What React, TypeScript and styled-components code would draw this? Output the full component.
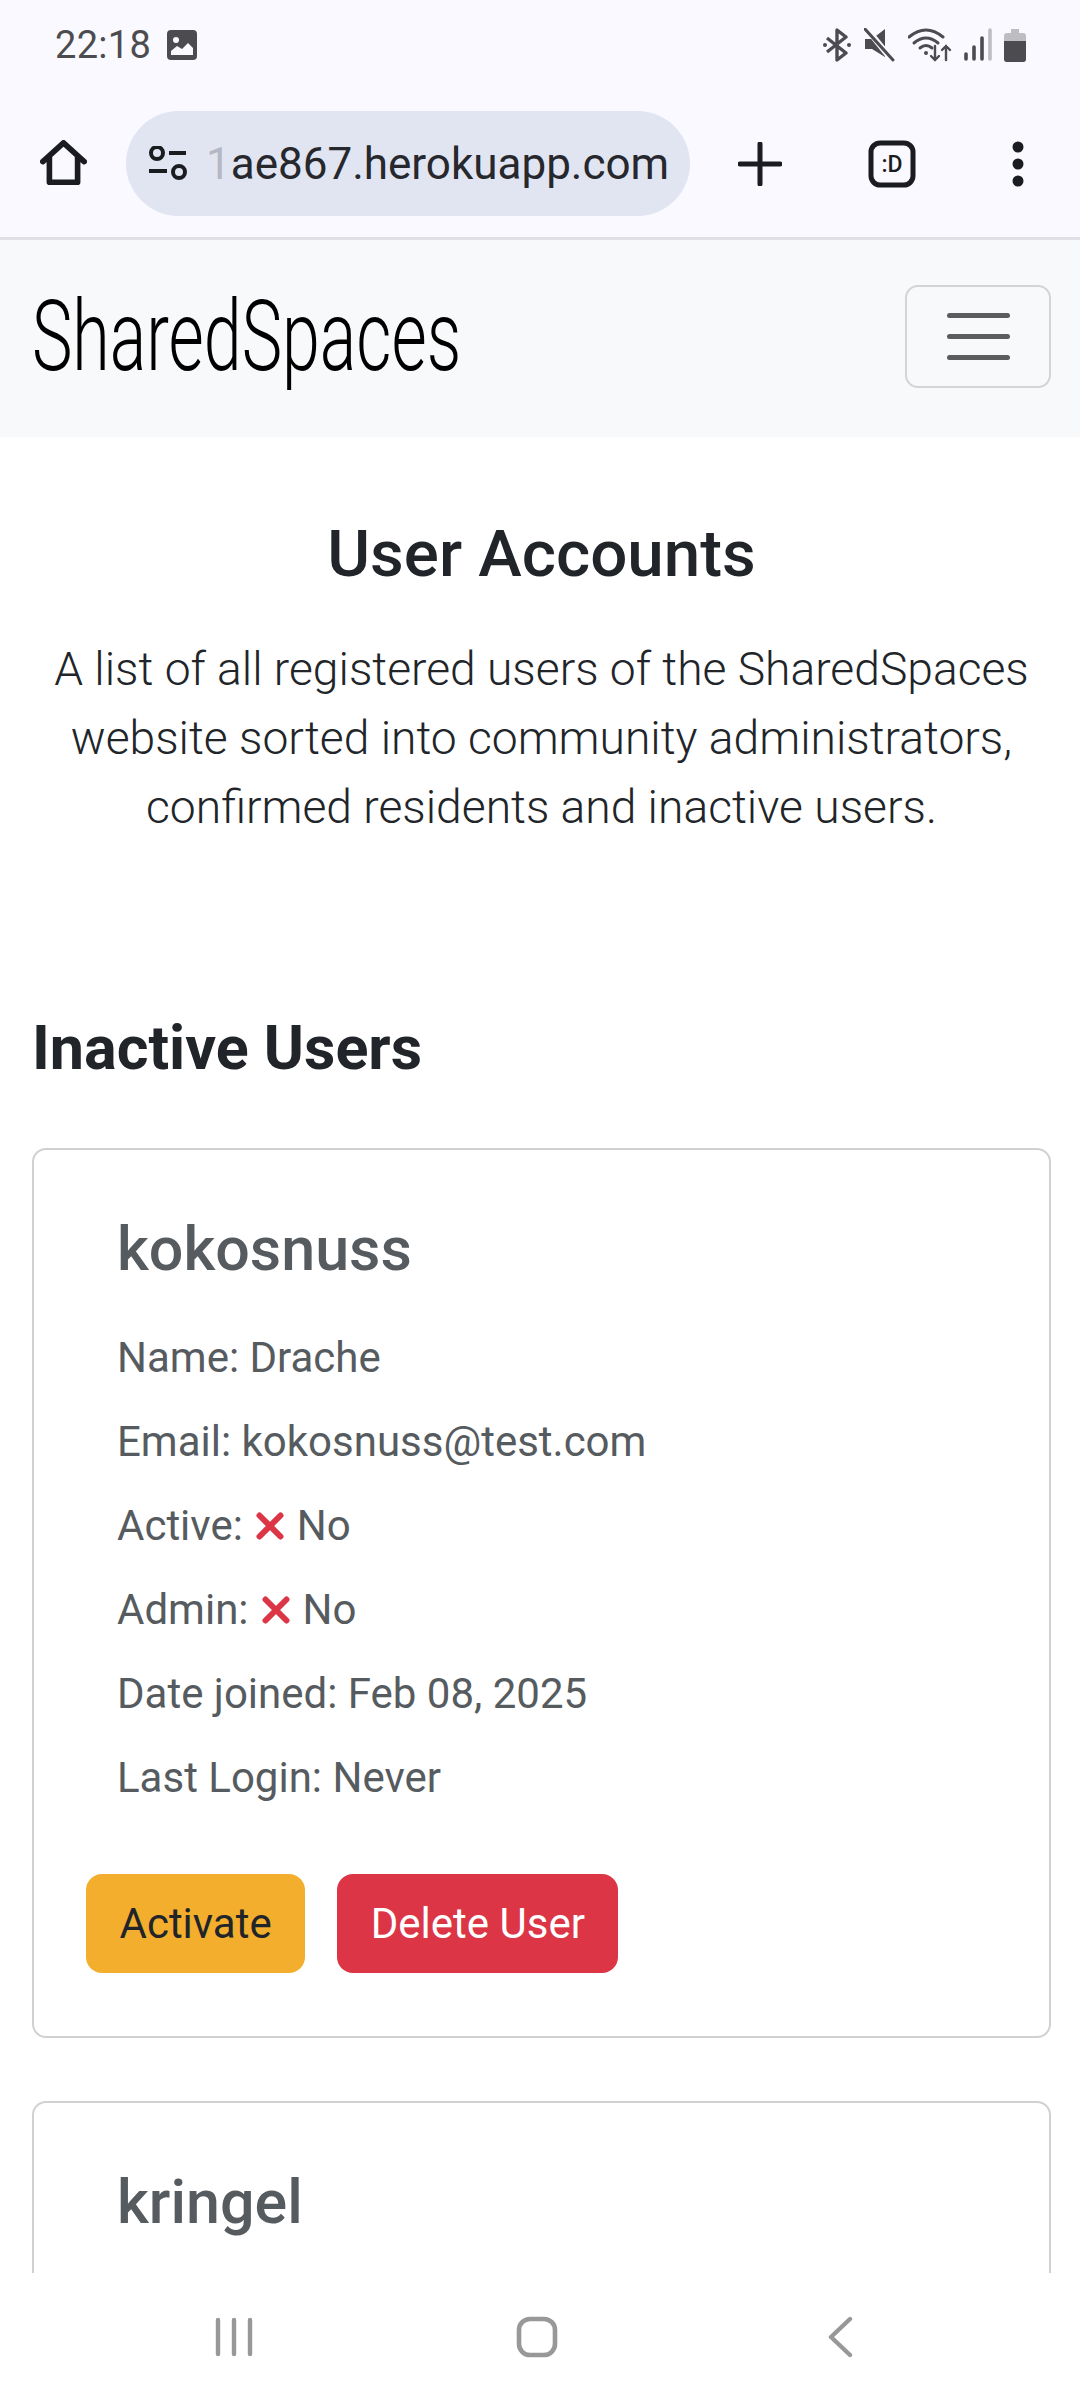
import React from 'react';
import styled, { createGlobalStyle } from 'styled-components';

const GlobalStyle = createGlobalStyle`
  html, body, #root {
    margin: 0;
    padding: 0;
    width: 1080px;
    height: 2400px;
    overflow: hidden;
    background: #ffffff;
  }
  * { box-sizing: border-box; }
`;

const Screen = styled.div`
  width: 1080px;
  height: 2400px;
  display: flex;
  flex-direction: column;
  font-family: Roboto, "Liberation Sans", sans-serif;
  color: #212529;
`;

const StatusBar = styled.div`
  height: 90px;
  padding: 0 54px 0 55px;
  display: flex;
  align-items: center;
  justify-content: space-between;
  background: #f9f9ff;
  color: #4c4c50;
`;

const StatusLeft = styled.div`
  display: flex;
  align-items: center;
  gap: 16px;
`;

const Clock = styled.span`
  font-size: 38px;
  letter-spacing: 0.3px;
`;

const StatusRight = styled.div`
  display: flex;
  align-items: center;
  gap: 12px;
`;

const BrowserBar = styled.div`
  height: 150px;
  padding: 0 0 0 40px;
  display: flex;
  align-items: center;
  background: #f9f9ff;
  border-bottom: 3px solid #dfe1e7;
`;

const UrlPill = styled.div`
  width: 564px;
  height: 105px;
  margin-left: 39px;
  padding: 0 0 0 22px;
  border-radius: 53px;
  background: #e1e5f1;
  display: flex;
  align-items: center;
  overflow: hidden;

  svg {
    flex-shrink: 0;
  }
`;

const UrlFade = styled.span`
  color: #b4b8c2;
  margin-left: 18px;
`;

const UrlText = styled.span`
  font-size: 44px;
  color: #26282d;
  white-space: nowrap;
`;

const BarIcon = styled.div<{ $left: number }>`
  margin-left: ${(p) => p.$left}px;
  display: flex;
  align-items: center;
`;

const NavBar = styled.nav`
  height: 197px;
  padding: 0 29px 4px 32px;
  display: flex;
  align-items: center;
  justify-content: space-between;
  background: #f8f9fa;
`;

const Brand = styled.div`
  font-family: Roboto, "Liberation Sans", sans-serif;
  font-size: 98px;
  font-weight: 350;
  line-height: 1;
  color: #000000;
  transform: scaleX(0.695);
  transform-origin: left center;
  white-space: nowrap;
  width: 429px;
`;

const Toggler = styled.button`
  width: 146px;
  height: 103px;
  padding: 0;
  border: 2px solid #d3d4d5;
  border-radius: 13px;
  background: transparent;
  display: flex;
  flex-direction: column;
  align-items: center;
  justify-content: center;
  gap: 16px;
`;

const TogglerLine = styled.span`
  width: 63px;
  height: 5px;
  border-radius: 3px;
  background: #5b5c5e;
`;

const Content = styled.main`
  flex: 1;
  min-height: 0;
  overflow: hidden;
  padding: 0 29px 0 32px;
  background: #ffffff;
`;

const PageTitle = styled.h1`
  margin: 78px 0 0;
  font-size: 65.5px;
  line-height: 1.2;
  font-weight: 500;
  text-align: center;
  color: #212529;
`;

const Lead = styled.p`
  margin: 41px 0 0;
  font-size: 46.2px;
  line-height: 69px;
  font-weight: 300;
  text-align: center;
  color: #212529;
`;

const SectionTitle = styled.h2`
  margin: 170px 0 0;
  font-size: 61px;
  line-height: 1.2;
  font-weight: 700;
  color: #212529;
`;

const Card = styled.section`
  margin-top: 63px;
  padding: 63px 52px 63px;
  border: 2px solid #d0d1d3;
  border-radius: 14px;
  background: #ffffff;
`;

const CardBody = styled.div`
  padding: 0 31px;
  color: #565b60;
`;

const UserName = styled.h3`
  margin: 0 0 30px;
  font-size: 61px;
  line-height: 1.2;
  font-weight: 500;
  color: #565b60;
`;

const Field = styled.p`
  margin: 0;
  height: 84px;
  display: flex;
  align-items: center;
  font-size: 42px;
  gap: 13px;
`;

const Actions = styled.div`
  margin-top: 54px;
  display: flex;
  gap: 32px;
`;

const ActionButton = styled.button<{ $bg: string; $fg: string }>`
  height: 99px;
  padding: 0 33.5px;
  border: none;
  border-radius: 16px;
  background: ${(p) => p.$bg};
  color: ${(p) => p.$fg};
  font-family: inherit;
  font-size: 42px;
`;

const SystemNav = styled.div`
  height: 127px;
  flex-shrink: 0;
  padding-left: 82px;
  display: grid;
  grid-template-columns: repeat(3, 303px);
  align-items: center;
  justify-items: center;
  background: #ffffff;
`;

const CrossIcon = () => (
  <svg width="28" height="28" viewBox="0 0 28 28">
    <path d="M3.5 3.5 L24.5 24.5 M24.5 3.5 L3.5 24.5" stroke="#dc3545" strokeWidth="6" strokeLinecap="round" fill="none" />
  </svg>
);

const PictureIcon = () => (
  <svg width="30" height="30" viewBox="0 0 30 30">
    <rect width="30" height="30" rx="4" fill="#4c4c50" />
    <circle cx="9" cy="10" r="3" fill="#f9f9ff" />
    <path d="M4 25 V21 L10 16 L15 19 L21 13 L26 18 V25 Z" fill="#f9f9ff" />
  </svg>
);

const BluetoothIcon = () => (
  <svg width="30" height="34" viewBox="0 0 30 34" fill="none" stroke="#4c4c50" strokeWidth="3.4">
    <path d="M5 10 L24 25 L15 32 V2 L24 9 L5 24" strokeLinejoin="round" />
    <circle cx="3" cy="17" r="2" fill="#4c4c50" stroke="none" />
    <circle cx="27" cy="17" r="2" fill="#4c4c50" stroke="none" />
  </svg>
);

const MuteIcon = () => (
  <svg width="32" height="34" viewBox="0 0 32 34">
    <path d="M1 11 H8 L21 1 V29 L8 21 H1 Z" fill="#4c4c50" />
    <path d="M3 1 L28 32" stroke="#f9f9ff" strokeWidth="6" />
    <path d="M1 1 L29 32" stroke="#4c4c50" strokeWidth="3" strokeLinecap="round" />
  </svg>
);

const WifiIcon = () => (
  <svg width="44" height="34" viewBox="0 0 44 34" fill="none" stroke="#4c4c50" strokeWidth="3" strokeLinecap="round">
    <path d="M1 9 Q18 -5 35 9" />
    <path d="M6 15 Q18 5 30 15" />
    <path d="M12 20 Q18 15 24 20" />
    <circle cx="18" cy="25" r="2" fill="#4c4c50" stroke="none" />
    <path d="M27 18 V32 M23 28 L27 32 L31 28" strokeWidth="2.4" />
    <path d="M38 32 V18 M34 22 L38 18 L42 22" strokeWidth="2.4" />
  </svg>
);

const SignalIcon = () => (
  <svg width="28" height="34" viewBox="0 0 28 34" fill="none" strokeWidth="3.6" strokeLinecap="round">
    <path d="M2 26 V31" stroke="#4c4c50" />
    <path d="M10 19 V31" stroke="#4c4c50" />
    <path d="M18 10 V31" stroke="#4c4c50" />
    <path d="M26 2 V31" stroke="#bdbdc2" />
  </svg>
);

const BatteryIcon = () => (
  <svg width="22" height="34" viewBox="0 0 22 34">
    <path d="M7 1 H15 V5 H19 Q22 5 22 8 V31 Q22 34 19 34 H3 Q0 34 0 31 V8 Q0 5 3 5 H7 Z" fill="#bdbdc2" />
    <path d="M0 13 H22 V31 Q22 34 19 34 H3 Q0 34 0 31 Z" fill="#4c4c50" />
  </svg>
);

const HomeIcon = () => (
  <svg width="47" height="47" viewBox="0 0 50 50" fill="none" stroke="#1b1c20" strokeWidth="6" strokeLinejoin="round" strokeLinecap="round">
    <path d="M3 23 L25 3 L47 23 M10 18 V45 H40 V18" />
  </svg>
);

const TuneIcon = () => (
  <svg width="40" height="36" viewBox="0 0 40 36" fill="none" stroke="#1b1c20" strokeWidth="4">
    <circle cx="9" cy="7" r="6" />
    <path d="M21 7 H38" />
    <path d="M1 25 H19" />
    <circle cx="31" cy="26" r="6" />
  </svg>
);

const PlusIcon = () => (
  <svg width="44" height="44" viewBox="0 0 44 44" stroke="#1b1c20" strokeWidth="5" strokeLinecap="round">
    <path d="M22 2 V42 M2 22 H42" />
  </svg>
);

const TabsIcon = () => (
  <svg width="48" height="48" viewBox="0 0 48 48">
    <rect x="3" y="3" width="42" height="42" rx="9" fill="none" stroke="#1b1c20" strokeWidth="5" />
    <text x="24" y="32" textAnchor="middle" fontFamily="Roboto, sans-serif" fontSize="23" fontWeight="500" fill="#1b1c20">:D</text>
  </svg>
);

const MoreIcon = () => (
  <svg width="14" height="46" viewBox="0 0 14 46" fill="#1b1c20">
    <circle cx="7" cy="6" r="5.5" />
    <circle cx="7" cy="23" r="5.5" />
    <circle cx="7" cy="40" r="5.5" />
  </svg>
);

const RecentsIcon = () => (
  <svg width="38" height="40" viewBox="0 0 38 40" stroke="#989898" strokeWidth="4.4" strokeLinecap="round">
    <path d="M3 3 V37 M19 3 V37 M35 3 V37" />
  </svg>
);

const HomeNavIcon = () => (
  <svg width="42" height="42" viewBox="0 0 42 42" fill="none" stroke="#989898" strokeWidth="4.6">
    <rect x="3" y="3" width="36" height="36" rx="11" />
  </svg>
);

const BackIcon = () => (
  <svg width="26" height="42" viewBox="0 0 26 42" fill="none" stroke="#989898" strokeWidth="4.4" strokeLinecap="round" strokeLinejoin="round">
    <path d="M23 3 L4 21 L23 39" />
  </svg>
);

const App: React.FC = () => {
  return (
    <Screen>
      <GlobalStyle />
      <StatusBar>
        <StatusLeft>
          <Clock>22:18</Clock>
          <PictureIcon />
        </StatusLeft>
        <StatusRight>
          <BluetoothIcon />
          <MuteIcon />
          <WifiIcon />
          <SignalIcon />
          <BatteryIcon />
        </StatusRight>
      </StatusBar>

      <BrowserBar>
        <HomeIcon />
        <UrlPill>
          <TuneIcon />
          <UrlText>
            <UrlFade>1</UrlFade>ae867.herokuapp.com
          </UrlText>
        </UrlPill>
        <BarIcon $left={48}>
          <PlusIcon />
        </BarIcon>
        <BarIcon $left={86}>
          <TabsIcon />
        </BarIcon>
        <BarIcon $left={95}>
          <MoreIcon />
        </BarIcon>
      </BrowserBar>

      <NavBar>
        <Brand>SharedSpaces</Brand>
        <Toggler>
          <TogglerLine />
          <TogglerLine />
          <TogglerLine />
        </Toggler>
      </NavBar>

      <Content>
        <PageTitle>User Accounts</PageTitle>
        <Lead>
          A list of all registered users of the SharedSpaces website sorted into community administrators, confirmed
          residents and inactive users.
        </Lead>
        <SectionTitle>Inactive Users</SectionTitle>

        <Card>
          <CardBody>
            <UserName>kokosnuss</UserName>
            <Field>Name: Drache</Field>
            <Field>Email: kokosnuss@test.com</Field>
            <Field>
              Active: <CrossIcon /> No
            </Field>
            <Field>
              Admin: <CrossIcon /> No
            </Field>
            <Field>Date joined: Feb 08, 2025</Field>
            <Field>Last Login: Never</Field>
          </CardBody>
          <Actions>
            <ActionButton $bg="#f4ae2e" $fg="#212529">Activate</ActionButton>
            <ActionButton $bg="#dc3545" $fg="#ffffff">Delete User</ActionButton>
          </Actions>
        </Card>

        <Card>
          <CardBody>
            <UserName>kringel</UserName>
          </CardBody>
        </Card>
      </Content>

      <SystemNav>
        <RecentsIcon />
        <HomeNavIcon />
        <BackIcon />
      </SystemNav>
    </Screen>
  );
};

export default App;
